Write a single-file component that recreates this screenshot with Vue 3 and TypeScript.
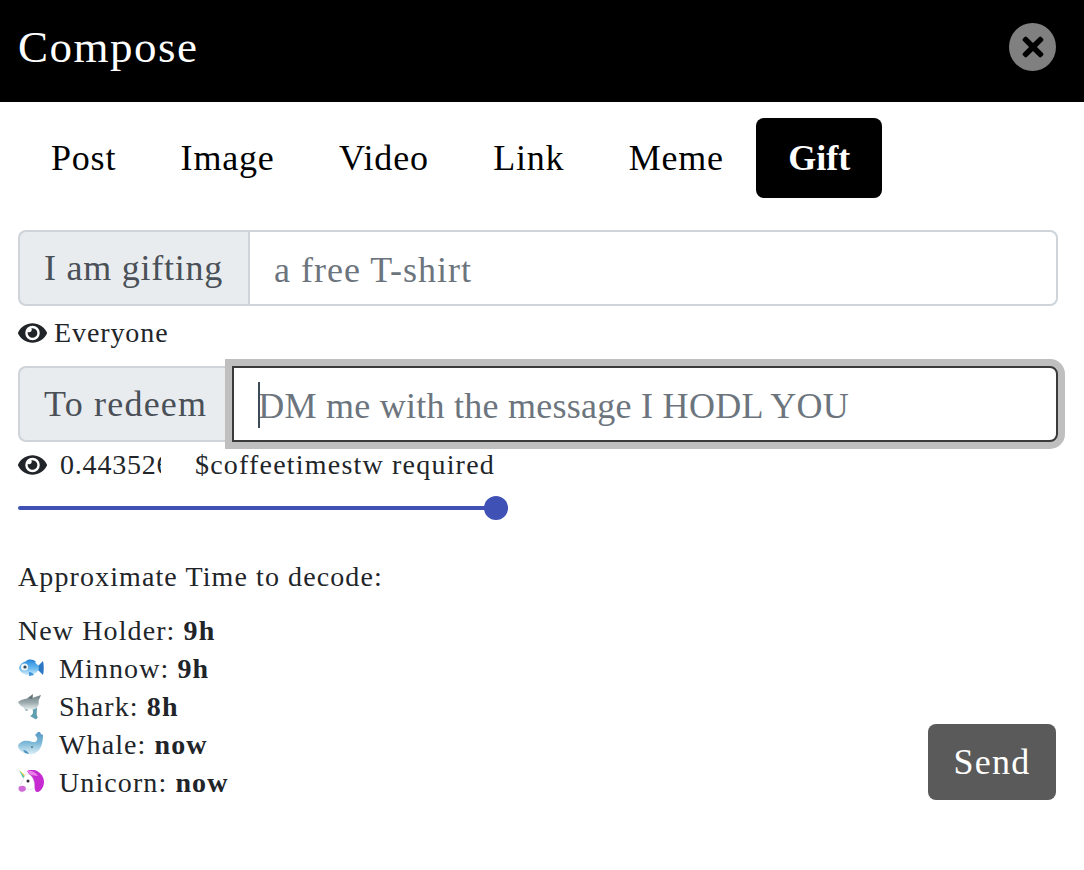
<script setup lang="ts">
const eye = "M572.52 241.4C518.29 135.59 410.93 64 288 64S57.68 135.64 3.48 241.41a32.35 32.35 0 0 0 0 29.19C57.71 376.41 165.07 448 288 448s230.32-71.64 284.52-177.41a32.35 32.35 0 0 0 0-29.19zM288 400a144 144 0 1 1 144-144 143.93 143.93 0 0 1-144 144zm0-240a95.31 95.31 0 0 0-25.31 3.79 47.85 47.85 0 0 1-66.9 66.9A95.78 95.78 0 1 0 288 160z";
const tabs = ["Post", "Image", "Video", "Link", "Meme", "Gift"];
</script>

<template>
  <div class="modal">
    <header class="head">
      <h1 class="title">Compose</h1>
      <button class="close" aria-label="Close">
        <svg width="22" height="22" viewBox="0 70 352 372"><path d="M242.72 256l100.07-100.07c12.28-12.28 12.28-32.19 0-44.48l-22.24-22.24c-12.28-12.28-32.19-12.28-44.48 0L176 189.28 75.93 89.21c-12.28-12.28-32.19-12.28-44.48 0L9.21 111.45c-12.28 12.28-12.28 32.19 0 44.48L109.28 256 9.21 356.07c-12.28 12.28-12.28 32.19 0 44.48l22.24 22.24c12.28 12.28 32.2 12.28 44.48 0L176 322.72l100.07 100.07c12.28 12.28 32.2 12.28 44.48 0l22.24-22.24c12.28-12.28 12.28-32.19 0-44.48L242.72 256z"/></svg>
      </button>
    </header>
    <nav class="tabs">
      <a v-for="t in tabs" :key="t" class="tab" :class="{ active: t === 'Gift' }">{{ t }}</a>
    </nav>
    <main class="body">
      <div class="group">
        <span class="addon gifting">I am gifting</span>
        <input class="field plain" placeholder="a free T-shirt" />
      </div>
      <div class="hint">
        <svg class="eye" viewBox="0 0 576 512"><path :d="eye" /></svg>
        <span>Everyone</span>
      </div>
      <div class="group">
        <span class="addon redeem">To redeem</span>
        <div class="focus-wrap">
          <input class="field focused" placeholder="DM me with the message I HODL YOU" />
          <i class="caret"></i>
        </div>
      </div>
      <div class="hint amount">
        <svg class="eye" viewBox="0 0 576 512"><path :d="eye" /></svg>
        <input class="num" value="0.443526" readonly />
        <span>$coffeetimestw required</span>
      </div>
      <input class="slider" type="range" min="0" max="100" value="100" />
      <p class="approx">Approximate Time to decode:</p>
      <div class="bottom">
        <ul class="list">
          <li><span>New Holder: <b>9h</b></span></li>
          <li>
            <svg class="emoji" viewBox="4 4 26 26">
              <defs>
                <linearGradient id="fishBody" x1="0" y1="0" x2="0" y2="1">
                  <stop offset="0" stop-color="#2f8fe0" />
                  <stop offset=".55" stop-color="#6fbcf0" />
                  <stop offset="1" stop-color="#d8eefa" />
                </linearGradient>
              </defs>
              <path d="M24 14l5-5c1 4 1 10 0 14l-5-5z" fill="#2a78c4" />
              <path d="M12 9c3-2 7-2 10 1l-3 2z" fill="#2f86d8" />
              <path d="M5 16c1-5 7-8 12-7 4 1 7 3 8 7-1 4-4 6-8 7-5 1-11-2-12-7z" fill="url(#fishBody)" />
              <path d="M15 20c2 0 4 1 5 3l-5 1z" fill="#3f96dc" />
              <circle cx="10.500" cy="15" r="3.600" fill="#eef3f6" />
              <circle cx="11" cy="15" r="1.600" fill="#33475a" />
            </svg>
            <span>Minnow: <b>9h</b></span>
          </li>
          <li>
            <svg class="emoji" viewBox="4 6 26 26">
              <defs>
                <linearGradient id="sharkBody" x1="0" y1="0" x2="0" y2="1">
                  <stop offset="0" stop-color="#6f8287" />
                  <stop offset=".5" stop-color="#9aa8ab" />
                  <stop offset="1" stop-color="#e6eeef" />
                </linearGradient>
              </defs>
              <path d="M18 20c2 4 1 7-2 8l6 3.500 2-2.500c-2-1-1-5-1-10z" fill="#5f9fb0" />
              <path d="M4 14c4-3 9-4 14-4l9-3-2.500 6c1 3-.5 6-3.500 8-6 2-14-1-17-7z" fill="url(#sharkBody)" />
              <path d="M13 10.500l6-4.500-.5 5z" fill="#64767b" />
              <path d="M10 19c1 2 3 3 5 3l-3 1z" fill="#7aa0aa" />
            </svg>
            <span>Shark: <b>8h</b></span>
          </li>
          <li>
            <svg class="emoji" viewBox="4 6 26 26">
              <defs>
                <linearGradient id="whaleBody" x1="0" y1="0" x2="0" y2="1">
                  <stop offset="0" stop-color="#4e93c0" />
                  <stop offset=".55" stop-color="#7fbad8" />
                  <stop offset="1" stop-color="#dceff6" />
                </linearGradient>
              </defs>
              <path d="M4 20c1-4 6-6 11-5 4 1 7 2 8-1 1-2-1-4-2-5l5-5c0 2 0 3 1 4l2 1c0 8-2 17-10 19-7 1-14-2-15-8z" fill="url(#whaleBody)" />
              <path d="M9 24c3 0 5 2 6 4l-4-1z" fill="#4e93c0" />
              <circle cx="18" cy="21" r=".8" fill="#1f3a4a" />
            </svg>
            <span>Whale: <b>now</b></span>
          </li>
          <li>
            <svg class="emoji" viewBox="4 6 26 26">
              <path d="M13 7c7-4 17 2 17 11 0 5-3 9-6 10-4 1-3-6-5-11-2-4-4-7-6-10z" fill="#c52bd0" />
              <path d="M13 7c4-1 9 1 11 5-3 0-5-1-7-1z" fill="#ea7fe8" />
              <path d="M5 6l7 6-1.500 1.500z" fill="#f2c93a" />
              <path d="M5 6l6 7.500-2 .5z" fill="#43c8a8" />
              <path d="M11 11c2-2 5-1 7 2 2 3 3 7 2 11-2 2-4 2-6 1-2-.5-3 2-6 3-3 0-4-3-3-5 2-3 4-7 6-12z" fill="#fff" stroke="#ddd2e6" stroke-width=".6" />
              <path d="M4.500 24c0 3 3 5 6 3 2-1 2-4-.5-5-2-.5-5 0-5.500 2z" fill="#cf6ad8" />
              <circle cx="14" cy="17" r="1.500" fill="#2e2436" />
            </svg>
            <span>Unicorn: <b>now</b></span>
          </li>
        </ul>
        <button class="send">Send</button>
      </div>
    </main>
  </div>
</template>

<style>
html, body { margin: 0; background: #fff; }
</style>

<style scoped>
.modal {
  width: 1084px;
  height: 870px;
  font-family: "Liberation Serif", serif;
  color: #212529;
  font-size: 28px;
  line-height: 38px;
  letter-spacing: 1.1px;
  overflow: hidden;
}
.head {
  background: #000;
  height: 102px;
  box-sizing: border-box;
  padding: 0 28px 8px 18px;
  display: flex;
  align-items: center;
  justify-content: space-between;
}
.title {
  margin: 0;
  font-size: 45px;
  font-weight: 400;
  color: #fff;
  letter-spacing: 1.5px;
}
.close {
  width: 47px;
  height: 48px;
  border-radius: 50%;
  background: #808080;
  border: 0;
  padding: 0;
  display: flex;
  align-items: center;
  justify-content: center;
}
.tabs {
  display: flex;
  padding: 16px 18px 0 18.8px;
  height: 80px;
  color: #000;
}
.tab {
  padding: 0 32.2px;
  font-size: 36px;
  letter-spacing: 0.8px;
  line-height: 80px;
  height: 80px;
  box-sizing: border-box;
  border-radius: 8px;
  color: #000;
}
.tab.active {
  background: #000;
  color: #fff;
  font-weight: 700;
  letter-spacing: 0;
}
.body {
  padding: 32px 28px 0 18px;
  display: flex;
  flex-direction: column;
}
.group {
  display: flex;
  height: 76px;
  width: 1040px;
}
.addon {
  display: flex;
  align-items: center;
  box-sizing: border-box;
  padding: 0 24px;
  background: #e9ecef;
  border: 2px solid #ced4da;
  border-right: 0;
  border-radius: 8px 0 0 8px;
  color: #495057;
  font-size: 36px;
  white-space: nowrap;
}
.addon.gifting { letter-spacing: 0.75px; padding-right: 25px; }
.addon.redeem { letter-spacing: 1.2px; padding-right: 25px; }
.field {
  flex: 1;
  min-width: 0;
  box-sizing: border-box;
  height: 76px;
  padding: 4px 24px 0;
  border: 2px solid #ced4da;
  border-radius: 0 8px 8px 0;
  font: inherit;
  font-size: 36px;
  outline: 0;
  background: #fff;
}
.field.plain { letter-spacing: 1px; }
.field::placeholder { color: #6c757d; opacity: 1; }
.focus-wrap { position: relative; flex: 1; display: flex; }
.field.focused {
  letter-spacing: 0.26px;
  border: 2px solid #3a3a3a;
  box-shadow: 0 0 0 7px #bfbfbf;
}
.caret {
  position: absolute;
  left: 26px;
  top: 16px;
  width: 2px;
  height: 46px;
  background: #3d4a57;
}
.hint {
  display: flex;
  align-items: center;
  box-sizing: border-box;
  height: 60px;
  padding-bottom: 6px;
  letter-spacing: 0.9px;
}
.eye { width: 29px; height: 26px; margin-right: 7px; fill: #212529; }
.amount { height: 46px; padding-bottom: 0; letter-spacing: 1.2px; }
.num {
  width: 101px;
  border: 0;
  padding: 0;
  margin: 0 34px 0 6px;
  font: inherit;
  color: #212529;
  background: transparent;
  outline: 0;
  letter-spacing: 0.8px;
}
.slider {
  -webkit-appearance: none;
  appearance: none;
  display: block;
  width: 490px;
  height: 24px;
  margin: 8px 0 0;
  background: transparent;
}
.slider::-webkit-slider-runnable-track {
  height: 4px;
  background: #3f51b5;
  border-radius: 2px;
}
.slider::-webkit-slider-thumb {
  -webkit-appearance: none;
  width: 24px;
  height: 24px;
  margin-top: -10px;
  border-radius: 50%;
  background: #3f51b5;
}
.approx { margin: 38px 0 0; }
.bottom {
  display: flex;
  justify-content: space-between;
  align-items: flex-end;
  margin-top: 16px;
}
.list { list-style: none; margin: 0; padding: 0; }
.list li { display: flex; align-items: center; height: 38px; }
.emoji { width: 26px; height: 26px; margin-right: 15px; }
.send {
  width: 128px;
  height: 76px;
  margin-bottom: 2px;
  background: #5a5a5a;
  color: #fff;
  border: 0;
  border-radius: 8px;
  font: inherit;
  font-size: 36px;
  letter-spacing: 1.2px;
}
</style>
